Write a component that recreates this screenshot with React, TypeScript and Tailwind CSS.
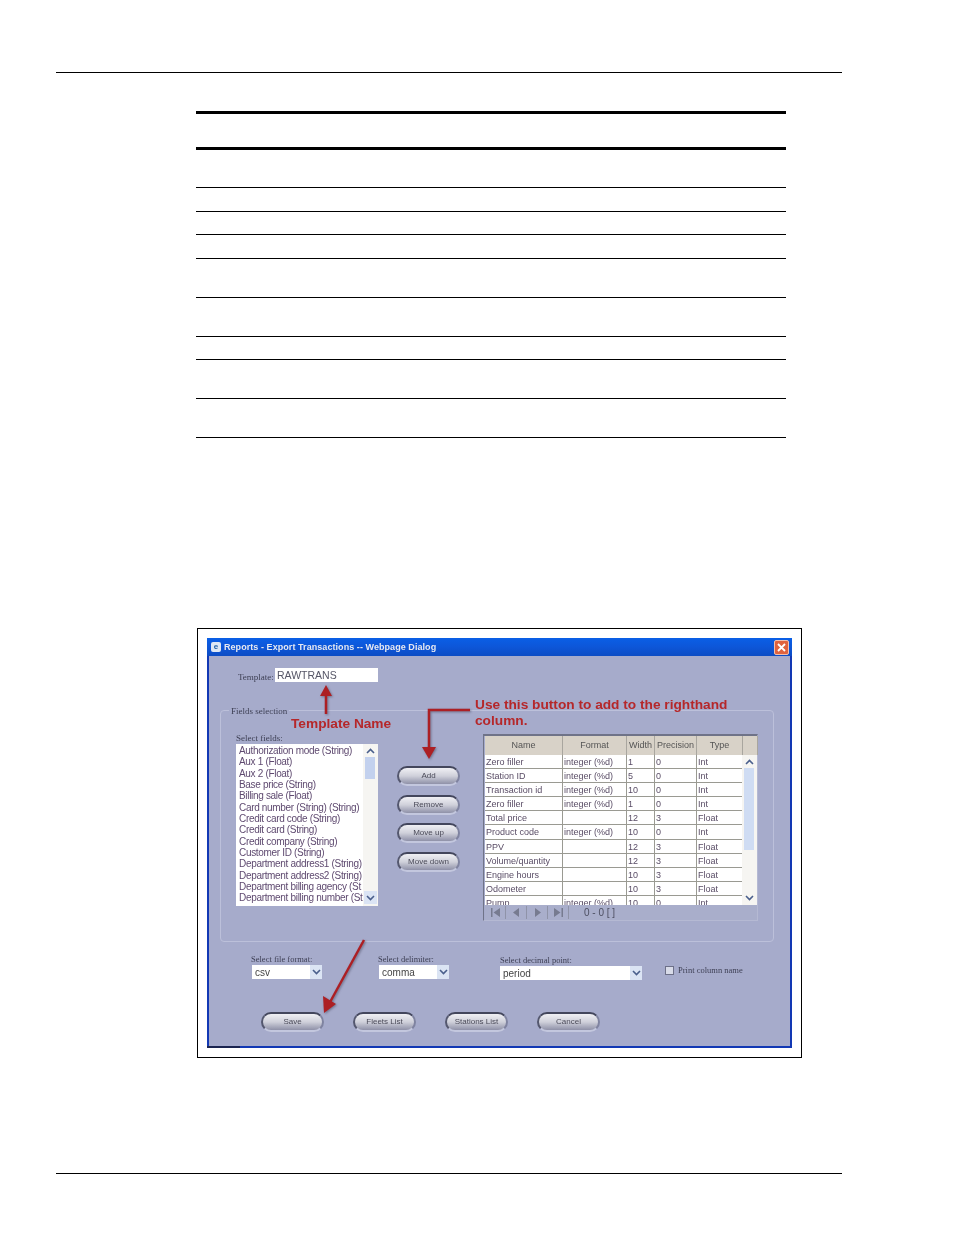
import React from "react";

const fields = [
  "Authorization mode (String)",
  "Aux 1 (Float)",
  "Aux 2 (Float)",
  "Base price (String)",
  "Billing sale (Float)",
  "Card number (String) (String)",
  "Credit card code (String)",
  "Credit card (String)",
  "Credit company (String)",
  "Customer ID (String)",
  "Department address1 (String)",
  "Department address2 (String)",
  "Department billing agency (St",
  "Department billing number (St",
];

const rows = [
  ["Zero filler", "integer (%d)", "1", "0", "Int"],
  ["Station ID", "integer (%d)", "5", "0", "Int"],
  ["Transaction id", "integer (%d)", "10", "0", "Int"],
  ["Zero filler", "integer (%d)", "1", "0", "Int"],
  ["Total price", "", "12", "3", "Float"],
  ["Product code", "integer (%d)", "10", "0", "Int"],
  ["PPV", "", "12", "3", "Float"],
  ["Volume/quantity", "", "12", "3", "Float"],
  ["Engine hours", "", "10", "3", "Float"],
  ["Odometer", "", "10", "3", "Float"],
  ["Pump", "integer (%d)", "10", "0", "Int"],
];

const ruleRows = [38, 24, 23, 24, 39, 39, 23, 39, 39];

function Chevron({ up }: { up?: boolean }) {
  return (
    <svg width="9" height="6" viewBox="0 0 9 6" className="block">
      <path d={up ? "M1 5 L4.5 1.5 L8 5" : "M1 1 L4.5 4.5 L8 1"} fill="none" stroke="#4a5f8c" strokeWidth="1.6" />
    </svg>
  );
}

function DlgButton({ label }: { label: string }) {
  return (
    <div className="w-[63px] h-[20px] rounded-full border-2 border-t-[#43465c] border-l-[#54576e] border-r-[#7f83a0] border-b-[#c3c7de] bg-gradient-to-b from-[#f0f0f4] via-[#cfd0da] to-[#8f91a8] flex items-center justify-center text-[8px] text-[#4a4a58] font-['Liberation_Sans',sans-serif]">
      {label}
    </div>
  );
}

function Select({ value, width }: { value: string; width: string }) {
  return (
    <div className={`${width} h-[14px] bg-white flex items-center justify-between text-[10px] leading-none text-[#444] font-['Liberation_Sans',sans-serif]`}>
      <span className="pl-[3px] pt-[1px]">{value}</span>
      <span className="w-[12px] h-full bg-[#dbe4f4] flex items-center justify-center">
        <Chevron />
      </span>
    </div>
  );
}

function Nav({ d }: { d: string }) {
  return (
    <div className="w-[21px] h-full border-r border-[#8f93a8] flex items-center justify-center">
      <svg width="11" height="9" viewBox="0 0 11 9">
        <path d={d} fill="#777b90" />
      </svg>
    </div>
  );
}

export default function App() {
  return (
    <div className="relative w-[954px] h-[1235px] bg-white overflow-hidden flex flex-col">
      <div className="mt-[72px] ml-[56px] w-[786px] h-px bg-black" />

      <div className="mt-[38px] ml-[196px] w-[590px]">
        <div className="h-[39px] border-t-[3px] border-b-[3px] border-black" />
        {ruleRows.map((h, i) => (
          <div key={i} className="border-b border-black" style={{ height: h }} />
        ))}
      </div>

      <div className="mt-[190px] ml-[197px] w-[605px] h-[430px] border border-black p-[9px] shrink-0">
        <div className="relative w-[585px] h-[410px] border-2 border-t-0 border-[#1238b4] bg-[#a6abcb] flex flex-col blur-[0.45px]">
          <div className="-mx-[2px] h-[18px] bg-gradient-to-b from-[#0a5fe6] via-[#0d56d8] to-[#0c4cc4] flex items-center shrink-0">
            <div className="ml-[4px] w-[10px] h-[10px] rounded-[2px] bg-[#dfe8f4] flex items-center justify-center text-[8px] font-bold text-[#1d5fa8] leading-none font-['Liberation_Sans',sans-serif]">
              e
            </div>
            <span className="ml-[3px] mt-[1px] text-[9px] font-bold tracking-[0.06px] text-[#e6e9f2] font-['Liberation_Sans',sans-serif] whitespace-nowrap">
              Reports - Export Transactions -- Webpage Dialog
            </span>
            <div className="ml-auto mr-[3px] w-[15px] h-[15px] rounded-[2px] bg-[#e0633e] border border-[#f0c0b0] flex items-center justify-center">
              <svg width="9" height="9" viewBox="0 0 9 9">
                <path d="M1 1 L8 8 M8 1 L1 8" stroke="#fff" strokeWidth="1.8" />
              </svg>
            </div>
          </div>

          <div className="mt-[12px] ml-[29px] flex items-center h-[14px]">
            <span className="text-[9px] text-[#3f4156] font-['Liberation_Serif',serif] w-[37px] pt-[6px]">Template:</span>
            <div className="w-[103px] h-[14px] bg-white pl-[2px] text-[10.5px] leading-[14px] text-[#555566] font-['Liberation_Sans',sans-serif]">
              RAWTRANS
            </div>
          </div>

          <div className="relative mt-[28px] ml-[11px] w-[554px] h-[232px] border border-[#bcc0da] rounded-[4px] flex items-start shrink-0">
            <span className="absolute -top-[5px] left-[8px] px-[2px] bg-[#a6abcb] text-[9px] leading-[11px] text-[#3f4156] font-['Liberation_Serif',serif]">
              Fields selection
            </span>
            <div className="ml-[15px] mt-[22px] w-[142px]">
              <div className="h-[11px] text-[9px] leading-[11px] text-[#3f4156] font-['Liberation_Serif',serif]">Select fields:</div>
              <div className="relative w-[142px] h-[162px] bg-white pl-[3px] pt-[1px] overflow-hidden">
                {fields.map((f) => (
                  <div key={f} className="h-[11.35px] text-[10px] tracking-[-0.32px] leading-[11.35px] whitespace-nowrap text-[#5f4a70] font-['Liberation_Sans',sans-serif]">
                    {f}
                  </div>
                ))}
                <div className="absolute right-0 top-0 w-[15px] h-full bg-[#f6f5f2] flex flex-col items-center justify-between py-[4px]">
                  <Chevron up />
                  <div className="absolute top-[13px] left-[2px] w-[10px] h-[22px] bg-[#c3d1ee]" />
                  <div className="w-[13px] h-[13px] -mb-[2px] bg-[#dbe4f4] flex items-center justify-center">
                    <Chevron />
                  </div>
                </div>
              </div>
            </div>

            <div className="ml-[19px] mt-[55px] flex flex-col gap-[8.5px]">
              <DlgButton label="Add" />
              <DlgButton label="Remove" />
              <DlgButton label="Move up" />
              <DlgButton label="Move down" />
            </div>

            <div className="ml-[23px] mt-[23px] w-[275px] h-[187px] border-t-2 border-l border-[#6f7388] border-r border-r-[#b5b9d3] border-b border-b-[#b5b9d3] pl-[1px] flex flex-col">
              <div className="grid grid-cols-[78px_64px_28px_42px_46px_15px] h-[19px] bg-[#d8d2c8] text-[9px] text-[#555] font-['Liberation_Sans',sans-serif] shrink-0">
                {["Name", "Format", "Width", "Precision", "Type", ""].map((h, i) => (
                  <div key={i} className="flex items-center justify-center border-r border-[#a9a69f] whitespace-nowrap">
                    {h}
                  </div>
                ))}
              </div>
              <div className="relative h-[150px] overflow-hidden shrink-0">
                {rows.map((r, i) => (
                  <div key={i} className="grid grid-cols-[78px_64px_28px_42px_46px] h-[14.1px] bg-white border-b border-[#9a9a92] text-[9px] leading-[14px] text-[#5a4d66] font-['Liberation_Sans',sans-serif] w-[258px]">
                    {r.map((c, j) => (
                      <div key={j} className="pl-[1px] border-r border-[#9a9a92] whitespace-nowrap overflow-hidden">
                        {c}
                      </div>
                    ))}
                  </div>
                ))}
                <div className="absolute right-0 top-0 w-[15px] h-full bg-[#f6f5f2] flex flex-col items-center justify-between py-[4px]">
                  <Chevron up />
                  <div className="absolute top-[13px] left-[2px] w-[10px] h-[82px] bg-[#cfdcf3]" />
                  <Chevron />
                </div>
              </div>
              <div className="flex items-center h-[15px] bg-[#a9aecb]">
                <div className="flex h-[13px] items-center">
                  <Nav d="M1 0 H2.5 V9 H1 Z M10 0 V9 L3.5 4.5 Z" />
                  <Nav d="M8 0 V9 L2 4.5 Z" />
                  <Nav d="M3 0 V9 L9 4.5 Z" />
                  <Nav d="M1 0 V9 L7.5 4.5 Z M8.5 0 H10 V9 H8.5 Z" />
                </div>
                <span className="ml-[15px] text-[10px] text-[#4d4f62] font-['Liberation_Sans',sans-serif]">0 - 0 [ ]</span>
              </div>
            </div>
          </div>

          <div className="mt-[11px] ml-[43px] flex items-start">
            <div className="w-[127px]">
              <div className="-ml-[1px] h-[12px] text-[8.5px] leading-[12px] text-[#3f4156] font-['Liberation_Serif',serif]">Select file format:</div>
              <Select value="csv" width="w-[70px]" />
            </div>
            <div className="w-[121px]">
              <div className="-ml-[1px] h-[12px] text-[8.5px] leading-[12px] text-[#3f4156] font-['Liberation_Serif',serif]">Select delimiter:</div>
              <Select value="comma" width="w-[70px]" />
            </div>
            <div className="mt-[1px] w-[165px]">
              <div className="h-[12px] text-[8.5px] leading-[12px] text-[#3f4156] font-['Liberation_Serif',serif]">Select decimal point:</div>
              <Select value="period" width="w-[142px]" />
            </div>
            <div className="mt-[11px] flex items-center">
              <div className="w-[9px] h-[9px] bg-[#d8dbe8] border border-[#6d7088]" />
              <span className="ml-[4px] text-[8.5px] text-[#3f4156] font-['Liberation_Serif',serif] whitespace-nowrap">Print column name</span>
            </div>
          </div>

          <div className="mt-[32px] ml-[52px] flex gap-[29px]">
            <DlgButton label="Save" />
            <DlgButton label="Fleets List" />
            <DlgButton label="Stations List" />
            <DlgButton label="Cancel" />
          </div>

          <svg className="absolute left-0 top-0 pointer-events-none drop-shadow-[1px_1px_1px_rgba(60,60,80,0.5)]" width="585" height="411" viewBox="0 0 585 411">
            <g fill="none" stroke="#ac1f24" strokeWidth="2.5">
              <path d="M117 54 V76" />
              <path d="M261 72 H220 V112" />
              <path d="M155 302 L120 366" />
            </g>
            <g fill="#ac1f24">
              <path d="M117 47 L123 58 H111 Z" />
              <path d="M213 109 H227 L220 121 Z" />
              <path d="M115 375 L114 358 L127 366 Z" />
            </g>
          </svg>
          <span className="absolute left-[82px] top-[76px] text-[13.7px] font-bold text-[#b5272a] whitespace-nowrap font-['Liberation_Sans',sans-serif]">
            Template Name
          </span>
          <div className="absolute left-[266px] top-[59px] text-[13.7px] leading-[16px] font-bold text-[#b5272a] whitespace-nowrap font-['Liberation_Sans',sans-serif]">
            <div>Use this button to add to the righthand</div>
            <div>column.</div>
          </div>
          <div className="absolute -left-[2px] -bottom-[2px] w-[33px] h-[2px] bg-[#1a2450]" />
        </div>
      </div>

      <div className="mt-[115px] ml-[56px] w-[786px] h-px bg-black" />
    </div>
  );
}
